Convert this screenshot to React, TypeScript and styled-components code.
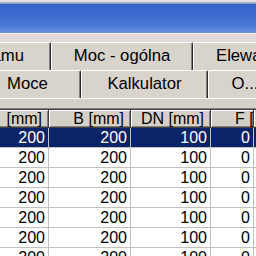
import React from 'react'
import styled, { createGlobalStyle } from 'styled-components'

const GlobalStyle = createGlobalStyle`
  html, body {
    margin: 0;
    padding: 0;
    background: #d4d0c8;
    overflow: hidden;
  }
  * {
    box-sizing: border-box;
  }
`

type Column = { title: string; width: number; headPad?: number }

const columns: Column[] = [
  { title: '[mm]', width: 83 },
  { title: 'B [mm]', width: 82 },
  { title: 'DN [mm]', width: 80 },
  { title: 'F [mm]', width: 43, headPad: 24 },
  { title: '', width: 60 },
]

const rows = [
  ['200', '200', '100', '0', ''],
  ['200', '200', '100', '0', ''],
  ['200', '200', '100', '0', ''],
  ['200', '200', '100', '0', ''],
  ['200', '200', '100', '0', ''],
  ['200', '200', '100', '0', ''],
  ['200', '200', '100', '0', ''],
]

const App = () => {
  return (
    <>
      <GlobalStyle />
      <StyledWindow>
        {/* caption */}
        <StyledTopEdge />
        <StyledCaption />
        <StyledStrip />

        {/* tabs, back row */}
        <StyledTabRow>
          <StyledTab $w={73} $lead={-22} $justify='flex-end' $pad={26}>
            amu
          </StyledTab>
          <StyledTab $w={142}>Moc - ogólna</StyledTab>
          <StyledTab $w={130} $justify='flex-start' $pad={22}>
            Elewacja
          </StyledTab>
        </StyledTabRow>

        {/* tabs, front row */}
        <StyledTabRow>
          <StyledTab $w={107} $lead={-26}>
            Moce
          </StyledTab>
          <StyledTab $w={127}>Kalkulator</StyledTab>
          <StyledTab $w={74}>O...</StyledTab>
        </StyledTabRow>

        <StyledPanel>
          <StyledGrid>
            <StyledGridRow>
              {columns.map((c, j) => (
                <StyledHeadCell key={j} $w={c.width} $pad={c.headPad}>
                  {c.title}
                </StyledHeadCell>
              ))}
            </StyledGridRow>
            {rows.map((r, i) => (
              <StyledGridRow key={i}>
                {r.map((v, j) => (
                  <StyledCell key={j} $w={columns[j].width} $selected={i === 0}>
                    {v}
                  </StyledCell>
                ))}
              </StyledGridRow>
            ))}
          </StyledGrid>
        </StyledPanel>
      </StyledWindow>
    </>
  )
}

export default App

const StyledWindow = styled.div`
  width: 256px;
  height: 256px;
  overflow: hidden;
  background: #d4d0c8;
  font-family: 'Liberation Sans', Arial, sans-serif;
  font-size: 16px;
  color: #000;
`

const StyledTopEdge = styled.div`
  height: 4px;
  background: linear-gradient(#e6e6ea 0, #d6d6dc 2px, #8a9cc8 3px);
`

const StyledCaption = styled.div`
  height: 29px;
  background: linear-gradient(
    to bottom,
    #3362c8 0%,
    #3d6cd0 40%,
    #4c7ad7 75%,
    #6a92dc 100%
  );
`

const StyledStrip = styled.div`
  height: 9px;
  border-top: 1px solid #f4eef0;
  background: #e2dada;
`

const StyledTabRow = styled.div`
  display: flex;
  height: 28px;
  white-space: nowrap;
`

const StyledTab = styled.div<{
  $w: number
  $lead?: number
  $justify?: string
  $pad?: number
}>`
  flex: 0 0 ${({ $w }) => $w}px;
  margin-left: ${({ $lead }) => $lead ?? 0}px;
  display: flex;
  align-items: center;
  justify-content: ${({ $justify }) => $justify ?? 'center'};
  padding: 0 ${({ $pad }) => $pad ?? 0}px 1px;
  overflow: hidden;
  background: #d8d4cc;
  border-top: 1px solid #ffffff;
  border-left: 1px solid #ffffff;
  border-right: 1px solid #2a2a2a;
  border-top-left-radius: 2px;
  border-top-right-radius: 2px;
  box-shadow: inset -1px 0 #808080;
  font-size: 16.7px;
`

const StyledPanel = styled.div`
  border-top: 1px solid #ffffff;
  padding-top: 9px;
  background: #d4d0c8;
`

const StyledGrid = styled.div`
  border-top: 1px solid #808080;
  box-shadow: inset 0 1px #404040;
  padding-top: 1px;
  background: #ffffff;
  margin-left: -34px;
`

const StyledGridRow = styled.div`
  display: flex;
  white-space: nowrap;
`

const StyledHeadCell = styled.div<{ $w: number; $pad?: number }>`
  flex: 0 0 ${({ $w }) => $w}px;
  height: 18px;
  display: flex;
  align-items: center;
  justify-content: ${({ $pad }) => ($pad ? 'flex-start' : 'flex-end')};
  padding: ${({ $pad }) => ($pad ? `0 0 0 ${$pad}px` : '0 6px 0 0')};
  overflow: hidden;
  background: #d4d0c8;
  border-right: 1px solid #404040;
  border-bottom: 1px solid #404040;
  box-shadow: inset 1px 1px #ffffff, inset -1px -1px #808080;
`

const StyledCell = styled.div<{ $w: number; $selected: boolean }>`
  flex: 0 0 ${({ $w }) => $w}px;
  height: 20px;
  display: flex;
  align-items: center;
  justify-content: flex-end;
  padding-right: 3px;
  overflow: hidden;
  background: ${({ $selected }) => ($selected ? '#0a246a' : '#ffffff')};
  color: ${({ $selected }) => ($selected ? '#ffffff' : '#000000')};
  border-right: 1px solid #c0c0c0;
  border-bottom: 1px solid #c0c0c0;
`
